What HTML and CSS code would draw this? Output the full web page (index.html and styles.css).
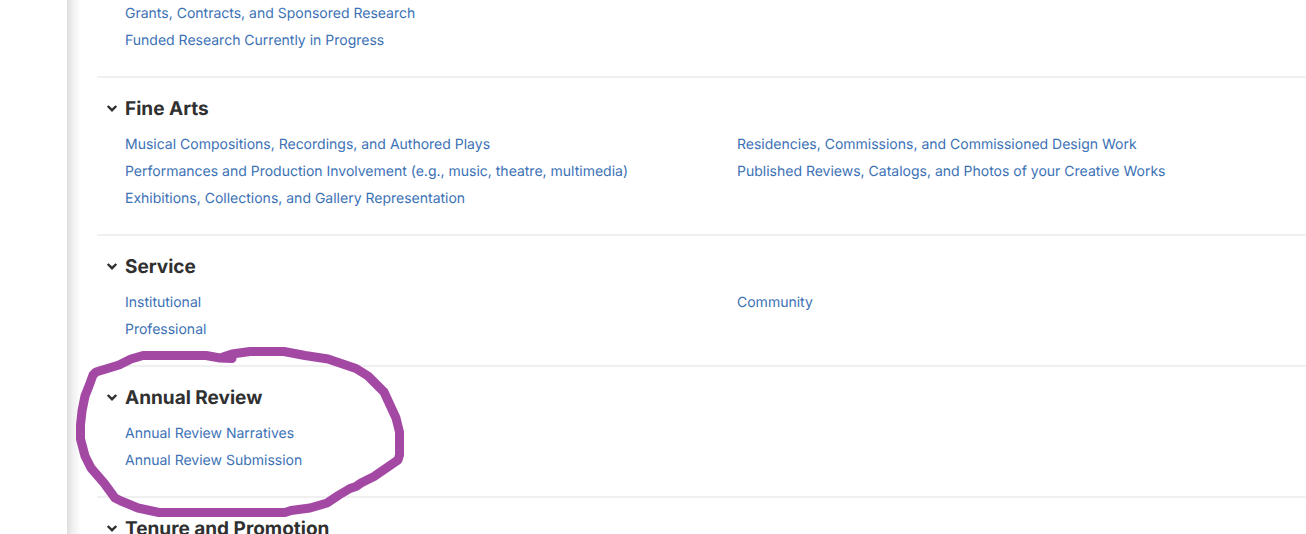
FILE: index.html
```html
<!DOCTYPE html>
<html lang="en">
<head>
<meta charset="utf-8">
<title>Activities</title>
<link rel="stylesheet" href="styles.css">
</head>
<body>
<main class="panel">
  <section class="group">
    <ul class="links">
      <li><a href="#">Grants, Contracts, and Sponsored Research</a></li>
      <li><a href="#">Funded Research Currently in Progress</a></li>
    </ul>
  </section>
  <section class="group">
    <h2><button class="toggle" type="button" aria-expanded="true"><svg class="chevron" viewBox="0 0 12 10" aria-hidden="true"><path d="M1.700 2L6 6.200L10.300 2"/></svg>Fine Arts</button></h2>
    <div class="columns">
      <ul class="links">
        <li><a href="#">Musical Compositions, Recordings, and Authored Plays</a></li>
        <li><a href="#">Performances and Production Involvement (e.g., music, theatre, multimedia)</a></li>
        <li><a href="#">Exhibitions, Collections, and Gallery Representation</a></li>
      </ul>
      <ul class="links">
        <li><a href="#">Residencies, Commissions, and Commissioned Design Work</a></li>
        <li><a href="#">Published Reviews, Catalogs, and Photos of your Creative Works</a></li>
      </ul>
    </div>
  </section>
  <section class="group">
    <h2><button class="toggle" type="button" aria-expanded="true"><svg class="chevron" viewBox="0 0 12 10" aria-hidden="true"><path d="M1.700 2L6 6.200L10.300 2"/></svg>Service</button></h2>
    <div class="columns">
      <ul class="links">
        <li><a href="#">Institutional</a></li>
        <li><a href="#">Professional</a></li>
      </ul>
      <ul class="links">
        <li><a href="#">Community</a></li>
      </ul>
    </div>
  </section>
  <section class="group">
    <h2><button class="toggle" type="button" aria-expanded="true"><svg class="chevron" viewBox="0 0 12 10" aria-hidden="true"><path d="M1.700 2L6 6.200L10.300 2"/></svg>Annual Review</button></h2>
    <ul class="links">
      <li><a href="#">Annual Review Narratives</a></li>
      <li><a href="#">Annual Review Submission</a></li>
    </ul>
    <svg class="marker" viewBox="76 346 330 172" aria-hidden="true"><path d="M232 358.500L220 358L206 355.500H143L131 359L119 365L96 372L93 375L89 386L85 396L82 411L80.500 425V439L85 456L91 468L104 483L115 498L121 501L138 508L159 512.500H285L291 510.500L310 508L327 503L339 495L350 488.500L356 486.500L361 483L374 476.500L398 460L399.500 455V432L396 418L384 392L368 376L356 368.500L328 359L305 355.500L284 351.500H250L232 354L223 357"/></svg>
  </section>
  <section class="group">
    <h2><button class="toggle" type="button" aria-expanded="true"><svg class="chevron" viewBox="0 0 12 10" aria-hidden="true"><path d="M1.700 2L6 6.200L10.300 2"/></svg>Tenure and Promotion</button></h2>
  </section>
</main>
</body>
</html>
```
FILE: styles.css
```css
* { box-sizing: border-box; }
html { height: 100%; overflow: hidden; }
body {
  height: 100%;
  margin: 0;
  overflow: hidden;
  background: #fff;
  color: #303030;
  font-family: Inter, "Liberation Sans", sans-serif;
  text-rendering: geometricPrecision;
}
.panel {
  min-height: 100%;
  margin-left: 67px;
  padding-left: 30px;
  background: linear-gradient(to right, #dfdfdf, #f0f0f0 6px, #fff 14px);
}
.group { position: relative; padding-bottom: 22px; }
.group + .group { padding-top: 18px; border-top: 2px solid #f0f0f0; }
h2 { margin: 0 0 9px; font-size: 19px; }
.toggle {
  display: flex;
  align-items: center;
  gap: 7px;
  padding: 0 0 0 9px;
  border: 0;
  background: none;
  color: inherit;
  font: 700 19px/26px Inter, "Liberation Sans", sans-serif;
  text-rendering: inherit;
}
.chevron { width: 12px; height: 10px; fill: none; stroke: #303030; stroke-width: 2.4; }
.columns { display: grid; grid-template-columns: 1fr 1fr; column-gap: 15px; }
.links { margin: 0; padding: 0 0 0 28px; list-style: none; font-size: 14px; line-height: 27px; }
.links a { color: #3b71b5; text-decoration: none; }
.marker {
  position: absolute;
  z-index: 1;
  top: -21px;
  left: -21px;
  width: 330px;
  height: 172px;
  fill: none;
  stroke: #a349a4;
  stroke-width: 9;
  stroke-linecap: round;
  stroke-linejoin: round;
  pointer-events: none;
}
```
